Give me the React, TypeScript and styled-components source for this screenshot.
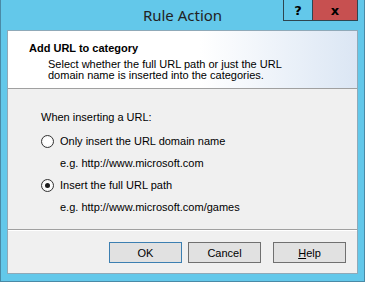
import React from "react";
import styled, { createGlobalStyle } from "styled-components";

const Global = createGlobalStyle`
  html, body { margin: 0; padding: 0; background: #63c8ea; }
  * { box-sizing: border-box; }
`;

const Window = styled.div`
  width: 365px;
  height: 282px;
  background: #63c8ea;
  border: 1px solid #4a8aa6;
  border-top: none;
  display: flex;
  flex-direction: column;
  font-family: "Liberation Sans", Arial, sans-serif;
  font-size: 11px;
  color: #000;
`;

const TitleBar = styled.div`
  height: 30px;
  display: grid;
  grid-template-columns: 1fr auto 1fr;
  align-items: start;
`;

const Title = styled.div`
  grid-column: 2;
  font-family: "Noto Sans", "Open Sans", sans-serif;
  font-size: 15px;
  line-height: 20px;
  padding-top: 5px;
  color: #222;
`;

const Controls = styled.div`
  grid-column: 3;
  justify-self: end;
  margin-right: 6px;
  display: flex;
  height: 21px;
  border: 1px solid #2e4550;
  border-top: none;
`;

const CtlButton = styled.div<{ $w: number; $bg: string }>`
  width: ${(p) => p.$w}px;
  height: 100%;
  background: ${(p) => p.$bg};
  display: flex;
  align-items: center;
  justify-content: center;
  font-family: "DejaVu Sans", sans-serif;
  font-weight: bold;
  font-size: 13px;
  color: #000;
  & + & { border-left: 1px solid #2e4550; }
`;

const Client = styled.div`
  flex: 1;
  margin: 0 6px 7px;
  border: 1px solid #8fa9b8;
  background: #f0f0f0;
  display: flex;
  flex-direction: column;
`;

const Header = styled.div`
  height: 58px;
  background: linear-gradient(to right, #ffffff 55%, #dbe6f4);
  border-bottom: 1px solid #a0a0a0;
  padding: 11px 0 0 21px;
`;

const HeaderTitle = styled.div`
  font-weight: bold;
  line-height: 13px;
`;

const HeaderDesc = styled.div`
  margin-top: 4px;
  padding-left: 19px;
  line-height: 11px;
  width: 260px;
`;

const Body = styled.div`
  flex: 1;
  padding: 22px 0 0 33px;
  border-bottom: 1px solid #a0a0a0;
  display: flex;
  flex-direction: column;
`;

const Line = styled.div<{ $indent?: number; $mt: number }>`
  line-height: 13px;
  margin-top: ${(p) => p.$mt}px;
  padding-left: ${(p) => p.$indent ?? 0}px;
  display: flex;
  align-items: center;
`;

const Radio = styled.span<{ $on?: boolean }>`
  width: 13px;
  height: 13px;
  border-radius: 50%;
  border: 1px solid #333;
  background: radial-gradient(circle, #fff 40%, #ececec);
  margin-right: 6px;
  display: flex;
  align-items: center;
  justify-content: center;
  &::after {
    content: "";
    display: ${(p) => (p.$on ? "block" : "none")};
    width: 5px;
    height: 5px;
    border-radius: 50%;
    background: #1e1e1e;
  }
`;

const Footer = styled.div`
  height: 43px;
  border-top: 1px solid #fff;
  display: flex;
  justify-content: flex-end;
  padding: 11px 11px 0 0;
`;

const Button = styled.button<{ $def?: boolean; $ml: number }>`
  width: 73px;
  height: 21px;
  margin-left: ${(p) => p.$ml}px;
  border: 1px solid ${(p) => (p.$def ? "#3c7fb1" : "#707070")};
  background: #e1e1e1;
  font-family: "Liberation Sans", Arial, sans-serif;
  font-size: 11px;
  color: #000;
  padding: 0;
  u { text-decoration: underline; }
`;

export default function App() {
  return (
    <>
      <Global />
      <Window>
        <TitleBar>
          <Title>Rule Action</Title>
          <Controls>
            <CtlButton $w={28} $bg="#63c8ea">?</CtlButton>
            <CtlButton $w={45} $bg="#c75050">x</CtlButton>
          </Controls>
        </TitleBar>
        <Client>
          <Header>
            <HeaderTitle>Add URL to category</HeaderTitle>
            <HeaderDesc>
              Select whether the full URL path or just the URL domain name is inserted into the categories.
            </HeaderDesc>
          </Header>
          <Body>
            <Line $mt={0}>When inserting a URL:</Line>
            <Line $mt={11}>
              <Radio />
              Only insert the URL domain name
            </Line>
            <Line $mt={9} $indent={19}>e.g. http://www.microsoft.com</Line>
            <Line $mt={9}>
              <Radio $on />
              Insert the full URL path
            </Line>
            <Line $mt={9} $indent={19}>e.g. http://www.microsoft.com/games</Line>
          </Body>
          <Footer>
            <Button $def $ml={0}>OK</Button>
            <Button $ml={6}>Cancel</Button>
            <Button $ml={12}>
              <u>H</u>elp
            </Button>
          </Footer>
        </Client>
      </Window>
    </>
  );
}
